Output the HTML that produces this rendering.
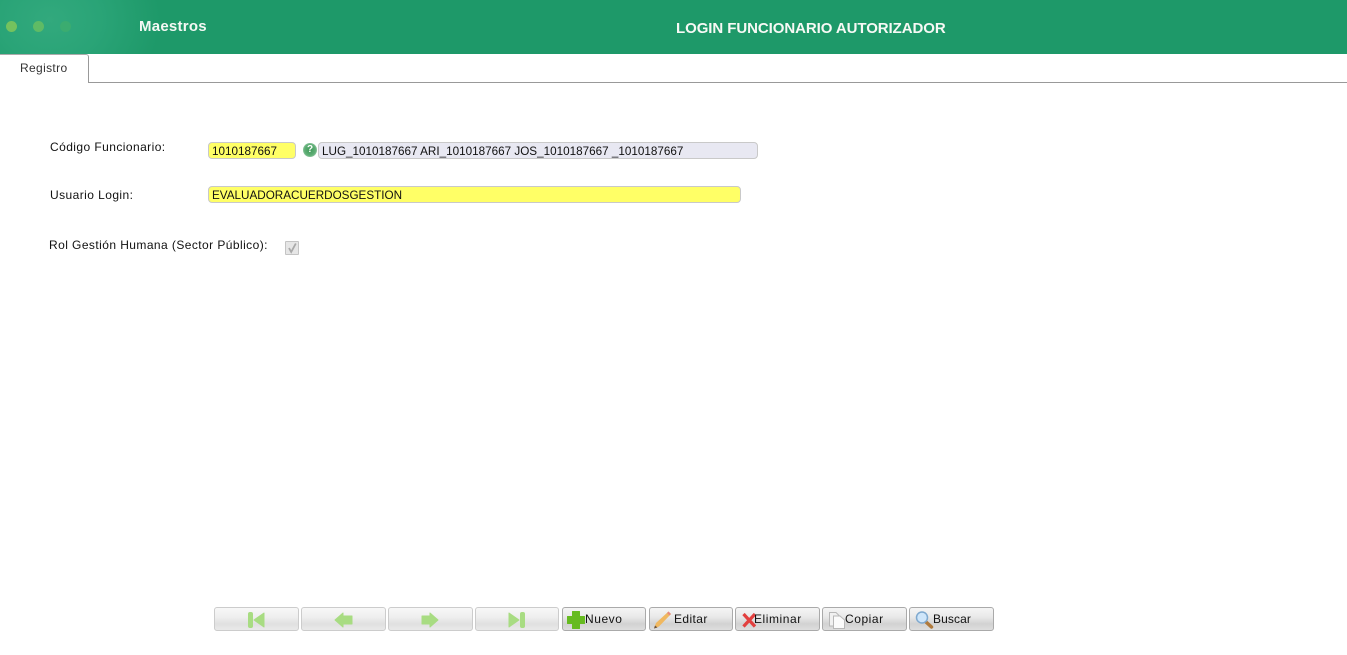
<!DOCTYPE html>
<html><head><meta charset="utf-8"><style>
html,body{margin:0;padding:0;background:#fff;width:1347px;height:655px;overflow:hidden;font-family:"Liberation Sans",sans-serif}
.a{position:absolute;white-space:nowrap}
#hd{left:0;top:0;width:1347px;height:54px;background:radial-gradient(ellipse 110px 90px at 50px 20px,#32a97d 0%,#2aa477 45%,#1e9969 100%)}
.dot{position:absolute;border-radius:50%;width:11px;height:11px;top:21px}
.lb{font-size:12px;color:#111;letter-spacing:.43px;line-height:14px}
.in{box-sizing:border-box;border:1px solid #c9c9c9;border-radius:4px;font-size:11.7px;line-height:15px;color:#111;padding:1px 0 0 3px}
.b{position:absolute;top:607px;height:24px;box-sizing:border-box;border:1px solid #aaa;border-radius:3px;background:linear-gradient(#f5f5f5 0%,#e9e9e9 40%,#d2d2d2 72%,#dedede 100%);font-size:12px;letter-spacing:.55px;color:#111;line-height:23px}
.b.d{border-color:#ccc;background:linear-gradient(#f8f8f8 0%,#efefef 40%,#e0e0e0 72%,#e9e9e9 100%)}
.b svg{position:absolute;left:0;top:0;overflow:visible}
.b span{position:absolute;top:0}
</style></head><body>
<div class="a" id="hd">
<div class="dot" style="left:6px;background:#74c25e"></div>
<div class="dot" style="left:33px;background:#5fbb65"></div>
<div class="dot" style="left:60px;background:#3bac70"></div>
</div>
<div class="a" style="left:139px;top:18px;font-size:15px;font-weight:bold;color:#f4f8f4;line-height:18px;letter-spacing:.25px">Maestros</div>
<div class="a" style="left:676px;top:20px;font-size:15px;font-weight:bold;color:#f7f9f5;line-height:18px;letter-spacing:-.07px">LOGIN FUNCIONARIO AUTORIZADOR</div>

<div class="a" style="left:0;top:82px;width:1347px;height:1px;background:#999"></div>
<div class="a" style="left:0;top:54px;width:88px;height:28px;background:#fff;border-right:1px solid #999;border-top:1px solid #aaa;border-radius:0 3px 0 0"></div>
<div class="a" style="left:20px;top:61px;font-size:12px;color:#333;line-height:15px;letter-spacing:.35px">Registro</div>

<div class="a lb" style="left:50px;top:140px">Código Funcionario:</div>
<div class="a lb" style="left:50px;top:188px">Usuario Login:</div>
<div class="a lb" style="left:49px;top:238px">Rol Gestión Humana (Sector Público):</div>

<div class="a in" style="left:208px;top:142px;width:88px;height:17px;background:#ffff66">1010187667</div>
<div class="a" style="left:303px;top:143px;width:14px;height:14px;border-radius:50%;background:radial-gradient(circle at 50% 50%,#3f9a58 0%,#5fae76 55%,#d5e9d9 100%);color:#fff;font-size:10px;font-weight:bold;line-height:14px;text-align:center">?</div>
<div class="a in" style="left:318px;top:142px;width:440px;height:17px;background:#e8e8f2">LUG_1010187667 ARI_1010187667 JOS_1010187667 _1010187667</div>
<div class="a in" style="left:208px;top:186px;width:533px;height:17px;background:#ffff66">EVALUADORACUERDOSGESTION</div>

<div class="a" style="left:285px;top:241px;width:14px;height:14px;box-sizing:border-box;border:1px solid #c4c4c4;background:#e6e6e6;border-radius:1px">
<svg width="12" height="12" style="position:absolute;left:0;top:0"><path d="M3 6 L5.2 10 L9.8 1.500" fill="none" stroke="#a9a9a9" stroke-width="1.8"/></svg></div>

<div class="b d" style="left:214px;width:85px"><svg width="85" height="24"><rect x="33" y="4" width="5" height="16" rx="2" fill="#a8dc82"/><path d="M39 12 L49 5 V19 Z" fill="#a8dc82" stroke="#a8dc82" stroke-linejoin="round"/></svg></div>
<div class="b d" style="left:301px;width:85px"><svg width="85" height="24"><path d="M33 12 L41 5 V8 H50 V16 H41 V19 Z" fill="#a8dc82" stroke="#a8dc82" stroke-linejoin="round"/></svg></div>
<div class="b d" style="left:388px;width:85px"><svg width="85" height="24"><path d="M49 12 L41 5 V8 H33 V16 H41 V19 Z" fill="#a8dc82" stroke="#a8dc82" stroke-linejoin="round"/></svg></div>
<div class="b d" style="left:475px;width:84px"><svg width="84" height="24"><path d="M33 5 L43 12 L33 19 Z" fill="#a8dc82" stroke="#a8dc82" stroke-linejoin="round"/><rect x="44" y="4" width="5" height="16" rx="2" fill="#a8dc82"/></svg></div>

<div class="b" style="left:562px;width:84px"><svg width="84" height="24"><path d="M9.500 3.500 H16.500 V8.500 H21.500 V15.500 H16.500 V20.500 H9.500 V15.500 H4.500 V8.500 H9.500 Z" fill="#66bb20" stroke="#66bb20" stroke-linejoin="round"/></svg><span style="left:22px">Nuevo</span></div>
<div class="b" style="left:649px;width:84px"><svg width="84" height="24"><path d="M4 20.500 L6 15 L18.500 3.500 L21 6 L9 18.500 Z" fill="#f0b860"/><path d="M18.500 3.500 L21 6 L19.500 7.500 L17 5 Z" fill="#e58a80"/><path d="M4 20.500 L5 17.500 L7.500 19.500 Z" fill="#6b5036"/></svg><span style="left:24px;letter-spacing:.4px">Editar</span></div>
<div class="b" style="left:735px;width:85px"><svg width="85" height="24"><path d="M7.500 6 L19 18.500 M19 6 L7.500 18.500" stroke="#e2403f" stroke-width="3.200" fill="none"/></svg><span style="left:18px">Eliminar</span></div>
<div class="b" style="left:822px;width:85px"><svg width="85" height="24"><path d="M6.500 4.500 H13 L16 7.500 V18 H6.500 Z" fill="#f1f1f1" stroke="#b8b8b8"/><path d="M10.500 8 H17 L21.500 12 V20.500 H10.500 Z" fill="#fbfbfb" stroke="#b8b8b8"/></svg><span style="left:22px">Copiar</span></div>
<div class="b" style="left:909px;width:85px"><svg width="85" height="24"><path d="M16 14 L21.500 19" stroke="#b07a3c" stroke-width="3.500" stroke-linecap="round"/><circle cx="12" cy="9.500" r="5.500" fill="#cfe6fa" stroke="#7fa9cf" stroke-width="1.500"/></svg><span style="left:23px;letter-spacing:.1px">Buscar</span></div>
</body></html>
